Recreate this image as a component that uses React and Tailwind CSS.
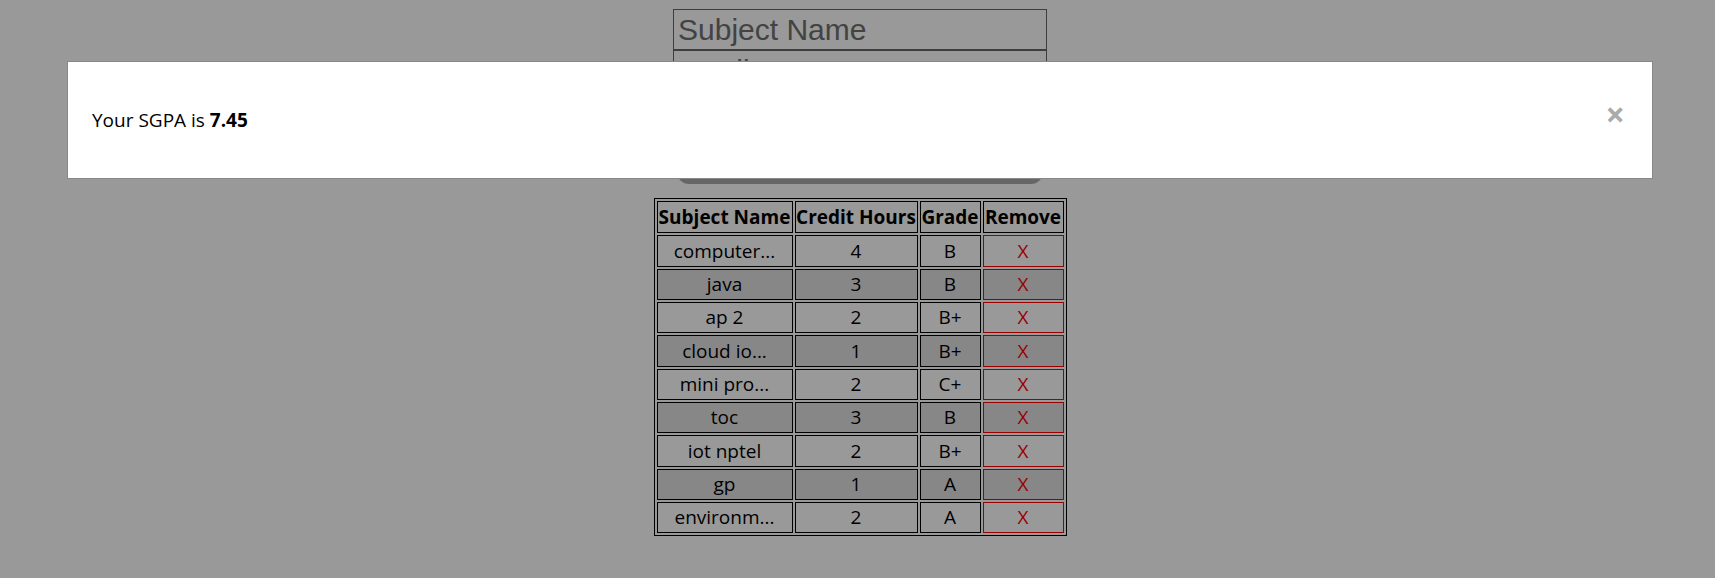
import React from 'react';

const subjects = [
  { name: 'computer...', credits: 4, grade: 'B' },
  { name: 'java', credits: 3, grade: 'B' },
  { name: 'ap 2', credits: 2, grade: 'B+' },
  { name: 'cloud io...', credits: 1, grade: 'B+' },
  { name: 'mini pro...', credits: 2, grade: 'C+' },
  { name: 'toc', credits: 3, grade: 'B' },
  { name: 'iot nptel', credits: 2, grade: 'B+' },
  { name: 'gp', credits: 1, grade: 'A' },
  { name: 'environm...', credits: 2, grade: 'A' },
];

const App = () => {
  return (
    <div className="relative min-h-[578px] bg-white font-['Open_Sans',sans-serif] text-black">
      {/* Form + table (behind the modal) */}
      <div className="flex flex-col items-center pl-[5px] pt-[9px]">
        <input
          placeholder="Subject Name"
          className="w-[374px] h-[41px] border border-[#666] px-[4px] text-[30px] font-['Liberation_Sans',Arial,sans-serif] placeholder:text-[#707070] bg-white"
        />
        <input
          placeholder="Credit Hours"
          className="w-[374px] h-[41px] border border-[#666] px-[4px] text-[30px] font-['Liberation_Sans',Arial,sans-serif] placeholder:text-[#707070] bg-white"
        />
        <select className="w-[374px] h-[41px] border border-[#666] px-[4px] text-[30px] font-['Liberation_Sans',Arial,sans-serif] bg-white">
          <option>Grade</option>
        </select>
        <button className="mt-[4px] w-[366px] h-[48px] rounded-[12px] bg-[#aaa] text-white text-[22px]">
          Add
        </button>

        <table className="mt-[14px] border border-black border-separate border-spacing-[2px] text-[19px] leading-none">
          <thead>
            <tr>
              <th className="w-[136px] h-[32px] border border-black p-0 font-bold">Subject Name</th>
              <th className="w-[123px] h-[32px] border border-black p-0 font-bold">Credit Hours</th>
              <th className="w-[61px] h-[32px] border border-black p-0 font-bold">Grade</th>
              <th className="w-[81px] h-[32px] border border-black p-0 font-bold">Remove</th>
            </tr>
          </thead>
          <tbody>
            {subjects.map((s, i) => {
              const bg = i % 2 === 1 ? 'bg-[#e2e2e2]' : 'bg-white';
              const h = i % 3 === 0 ? 'h-[32px]' : 'h-[31px]';
              return (
                <tr key={i}>
                  <td className={`${h} border border-black p-0 text-center ${bg}`}>{s.name}</td>
                  <td className={`${h} border border-black p-0 text-center ${bg}`}>{s.credits}</td>
                  <td className={`${h} border border-black p-0 text-center ${bg}`}>{s.grade}</td>
                  <td className={`${h} border border-[#ff0000] p-0 text-center text-[#ff0000] ${bg}`}>X</td>
                </tr>
              );
            })}
          </tbody>
        </table>
      </div>

      {/* Modal overlay */}
      <div className="absolute inset-0 bg-black/40">
        <div className="mt-[61px] ml-[67px] w-[1586px] h-[118px] bg-white border border-[#888] flex items-center justify-between pl-[24px] pr-[27px]">
          <p className="text-[19px] text-black">
            Your SGPA is <strong className="font-bold">7.45</strong>
          </p>
          <button className="mb-[12px] text-[34px] font-bold leading-none text-[#aaa]">&times;</button>
        </div>
      </div>
    </div>
  );
};

export default App;
